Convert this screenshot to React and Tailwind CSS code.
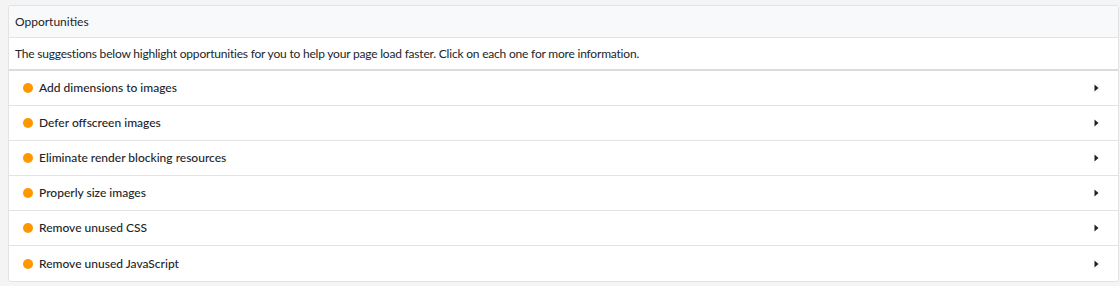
import React from "react";

const items = [
  "Add dimensions to images",
  "Defer offscreen images",
  "Eliminate render blocking resources",
  "Properly size images",
  "Remove unused CSS",
  "Remove unused JavaScript",
];

const Caret = () => (
  <svg width="5" height="8" viewBox="0 0 5 8" className="text-[#222]">
    <path d="M0.5 0.5 L4.5 4 L0.5 7.5 Z" fill="currentColor" />
  </svg>
);

const App = () => {
  return (
    <div className="min-h-[286px] bg-[#f4f4f4] pt-[5px] pl-[8px] pr-px font-['Lato',sans-serif] text-[#212529]">
      <div className="bg-white border border-[#e3e3e3] rounded-[3px] overflow-hidden">
        <div className="h-[32px] flex items-center px-[6px] bg-[#f8f9fa] border-b border-[#e3e3e3] text-[12px]">
          Opportunities
        </div>
        <div className="h-[33px] flex items-center px-[6px] border-b-2 border-[#dcdcdc] text-[12px] tracking-[-0.2px]">
          The suggestions below highlight opportunities for you to help your page load faster. Click on each one for more information.
        </div>
        {items.map((item, i) => (
          <div
            key={item}
            className={
              i < items.length - 1
                ? "h-[35px] flex items-center pl-[14px] pr-[19px] border-b border-[#e3e3e3]"
                : "h-[35px] flex items-center pl-[14px] pr-[19px]"
            }
          >
            <span className="w-[10px] h-[10px] rounded-full bg-[#ff9800] mr-[6px]" />
            <span className="text-[12px] font-medium flex-1">{item}</span>
            <Caret />
          </div>
        ))}
      </div>
    </div>
  );
};

export default App;
